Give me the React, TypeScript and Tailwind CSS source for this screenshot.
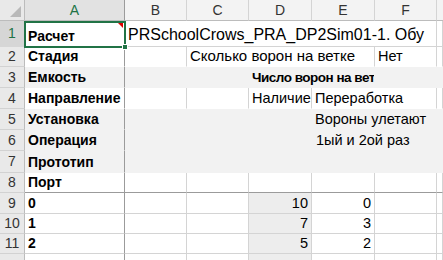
import React from "react";

type Cell = {
  w: number;
  text?: string;
  bold?: boolean;
  right?: boolean;
  pl?: number;
  bg?: string;
  cls?: string;
};

type RowDef = {
  n: number;
  h: number;
  gray?: boolean;
  noB?: boolean;
  freezeB?: boolean;
  cells: Cell[];
  selected?: boolean;
  hideNum?: boolean;
};

const W = { A: 100, B: 62, C: 62, D: 63, E: 63, F: 62, G: 6 };

const rows: RowDef[] = [
  {
    n: 1,
    h: 26,
    selected: true,
    cells: [
      { w: W.A, text: "Расчет", bold: true },
      {
        w: W.B + W.C + W.D + W.E + W.F,
        text: "PRSchoolCrows_PRA_DP2Sim01-1. Обу",
        cls: "!text-[16px]",
      },
      { w: W.G },
    ],
  },
  {
    n: 2,
    h: 20,
    noB: true,
    cells: [
      { w: W.A, text: "Стадия", bold: true },
      { w: W.B },
      { w: W.C + W.D + W.E, text: "Сколько ворон на ветке", cls: "!text-[15px]" },
      { w: W.F, text: "Нет" },
      { w: W.G },
    ],
  },
  {
    n: 3,
    h: 21,
    gray: true,
    cells: [
      { w: W.A, text: "Емкость", bold: true },
      { w: W.B + W.C },
      { w: W.D + W.E, text: "Число ворон на вет", bold: true, cls: "!text-[13.5px] tracking-[-0.5px]" },
      { w: W.F + W.G },
    ],
  },
  {
    n: 4,
    h: 21,
    noB: true,
    cells: [
      { w: W.A, text: "Направление", bold: true },
      { w: W.B },
      { w: W.C },
      { w: W.D, text: "Наличие" },
      { w: W.E + W.F, text: "Переработка" },
      { w: W.G },
    ],
  },
  {
    n: 5,
    h: 21,
    gray: true,
    cells: [
      { w: W.A, text: "Установка", bold: true },
      { w: W.B + W.C + W.D },
      { w: W.E + W.F + W.G, text: "Вороны улетают" },
    ],
  },
  {
    n: 6,
    h: 21,
    gray: true,
    cells: [
      { w: W.A, text: "Операция", bold: true },
      { w: W.B + W.C + W.D },
      { w: W.E + W.F + W.G, text: "1ый и 2ой раз", pl: 1 },
    ],
  },
  {
    n: 7,
    h: 22,
    gray: true,
    cells: [
      { w: W.A, text: "Прототип", bold: true },
      { w: W.B + W.C + W.D + W.E + W.F + W.G },
    ],
  },
  {
    n: 8,
    h: 20,
    freezeB: true,
    cells: [
      { w: W.A, text: "Порт", bold: true },
      { w: W.B },
      { w: W.C },
      { w: W.D },
      { w: W.E },
      { w: W.F },
      { w: W.G },
    ],
  },
  {
    n: 9,
    h: 21,
    cells: [
      { w: W.A, text: "0", bold: true },
      { w: W.B },
      { w: W.C },
      { w: W.D, text: "10", right: true, bg: "bg-[#ededed]" },
      { w: W.E, text: "0", right: true },
      { w: W.F },
      { w: W.G },
    ],
  },
  {
    n: 10,
    h: 20,
    cells: [
      { w: W.A, text: "1", bold: true },
      { w: W.B },
      { w: W.C },
      { w: W.D, text: "7", right: true, bg: "bg-[#ededed]" },
      { w: W.E, text: "3", right: true },
      { w: W.F },
      { w: W.G },
    ],
  },
  {
    n: 11,
    h: 20,
    cells: [
      { w: W.A, text: "2", bold: true },
      { w: W.B },
      { w: W.C },
      { w: W.D, text: "5", right: true, bg: "bg-[#ededed]" },
      { w: W.E, text: "2", right: true },
      { w: W.F },
      { w: W.G },
    ],
  },
  {
    n: 12,
    h: 20,
    hideNum: true,
    cells: [
      { w: W.A },
      { w: W.B },
      { w: W.C },
      { w: W.D, bg: "bg-[#ededed]" },
      { w: W.E },
      { w: W.F },
      { w: W.G },
    ],
  },
];

const font = { fontFamily: '"Liberation Sans", Arial, sans-serif' };

function Row({ r }: { r: RowDef }) {
  return (
    <div className="flex shrink-0" style={{ height: r.h }}>
      <div
        className={`w-[25px] shrink-0 flex items-center justify-center border-r border-r-[#bcbcbc] border-b text-[14px] ${
          r.selected
            ? "bg-[#d6d6d6] text-[#217346] border-b-[#d6d6d6]"
            : "bg-[#e9e9e9] text-[#333] border-b-[#d2d2d2]"
        } ${r.freezeB ? "border-b-[#9b9b9b]" : ""}`}
      >
        {r.hideNum ? "" : r.n}
      </div>
      {r.cells.map((c, i) => {
        const isA = i === 0;
        const bgc = c.bg ? c.bg : r.gray ? "bg-[#f2f2f2]" : "bg-white";
        const borderR = isA
          ? "border-r border-r-[#9b9b9b]"
          : r.gray
          ? "border-r border-r-transparent"
          : "border-r border-r-[#d4d4d4]";
        const borderB = r.freezeB
          ? "border-b border-b-[#9b9b9b]"
          : r.gray || r.noB
          ? "border-b border-b-transparent"
          : "border-b border-b-[#d4d4d4]";
        return (
          <div
            key={i}
            className={`shrink-0 overflow-hidden whitespace-nowrap flex items-end pb-[1px] leading-none text-black ${bgc} ${borderR} ${borderB} ${
              c.right ? "justify-end pr-[3px]" : "pl-[3px]"
            } ${c.bold ? "font-bold text-[14px]" : "text-[14.5px]"} ${c.cls ?? ""}`}
            style={{ width: c.w, paddingLeft: c.pl !== undefined ? c.pl + 3 : undefined }}
          >
            {c.text && <span className="pb-[2px]">{c.text}</span>}
          </div>
        );
      })}
    </div>
  );
}

export default function App() {
  const headers: [string, number][] = [
    ["A", W.A],
    ["B", W.B],
    ["C", W.C],
    ["D", W.D],
    ["E", W.E],
    ["F", W.F],
    ["", W.G + 20],
  ];
  return (
    <div className="w-[443px] h-[260px] overflow-hidden bg-white relative" style={font}>
      <div className="flex h-[21px] shrink-0">
        <div className="w-[25px] shrink-0 bg-[#e9e9e9] border-r border-r-[#bcbcbc] border-b border-b-[#bcbcbc] relative">
          <svg className="absolute right-[3px] bottom-[3px]" width="11" height="11" viewBox="0 0 11 11">
            <polygon points="11,0 11,11 0,11" fill="#b9b9b9" />
          </svg>
        </div>
        {headers.map(([l, w], i) => (
          <div
            key={i}
            className={`shrink-0 flex items-center justify-center text-[14px] border-r border-b ${
              i === 0
                ? "bg-[#e2e2e2] text-[#217346] border-r-[#9b9b9b] border-b-[#bcbcbc]"
                : "bg-[#f3f3f3] text-[#333] border-r-[#d4d4d4] border-b-[#bcbcbc]"
            }`}
            style={{ width: w }}
          >
            {l}
          </div>
        ))}
      </div>
      {rows.map((r) => (
        <Row key={r.n} r={r} />
      ))}
      <div className="absolute left-[24px] top-[21px] w-[102px] h-[27px] border-2 border-[#217346] pointer-events-none">
        <svg className="absolute right-[1px] top-[0px]" width="5" height="5" viewBox="0 0 5 5">
          <polygon points="0,0 5,0 5,5" fill="#e00000" />
        </svg>
      </div>
      <div className="absolute left-[122px] top-[44px] w-[6px] h-[6px] bg-[#217346] border border-white" />
    </div>
  );
}
